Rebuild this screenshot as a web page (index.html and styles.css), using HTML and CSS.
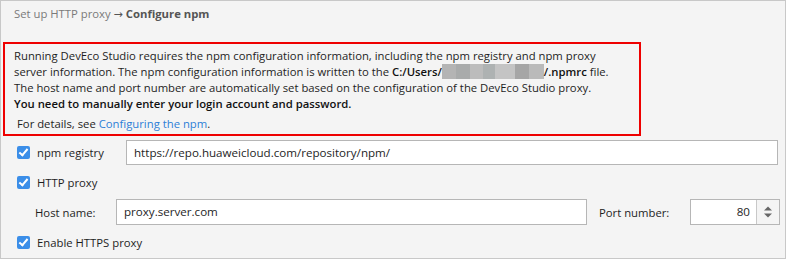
FILE: index.html
```html
<!DOCTYPE html>
<html>
<head>
  <title>Configure npm</title>
  <link rel="stylesheet" href="styles.css">
</head>
<body>
  <div class="panel">
    <div class="panel-title">Set up HTTP proxy <span class="arrow">→</span> <b>Configure npm</b></div>

    <div class="notice">
      <p class="notice-text">
        Running DevEco Studio requires the npm configuration information, including the npm registry and npm proxy<br>
        server information. The npm configuration information is written to the <b>C:/Users/<span class="blurred"></span>/.npmrc</b> file.<br>
        The host name and port number are automatically set based on the configuration of the DevEco Studio proxy.<br>
        <b>You need to manually enter your login account and password.</b>
      </p>
      <p class="notice-link">For details, see <a href="#">Configuring the npm</a>.</p>
    </div>

    <div class="form-row row-registry">
      <label class="check"><span class="check-box"></span>npm registry</label>
      <div class="text-field registry-field">https://repo.huaweicloud.com/repository/npm/</div>
    </div>

    <div class="form-row row-proxy">
      <label class="check"><span class="check-box"></span>HTTP proxy</label>
    </div>

    <div class="form-row row-host">
      <span class="field-label host-label">Host name:</span>
      <div class="text-field host-field">proxy.server.com</div>
      <span class="field-label port-label">Port number:</span>
      <div class="spinner">
        <div class="spinner-value">80</div>
        <div class="spinner-arrows">
          <svg width="10" height="14" viewBox="0 0 10 14"><path d="M5 1.5 L9 5.5 H1 Z" fill="#666"/><path d="M5 12.5 L9 8.5 H1 Z" fill="#666"/></svg>
        </div>
      </div>
    </div>

    <div class="form-row row-https">
      <label class="check"><span class="check-box"></span>Enable HTTPS proxy</label>
    </div>
  </div>
</body>
</html>
```

FILE: styles.css
```css
/* Page */
body {
  margin: 0;
  font-family: "Open Sans", "Noto Sans", sans-serif;
  font-size: 11.3px;
  color: #1e1e1e;
}

.panel {
  width: 786px;
  height: 259px;
  box-sizing: border-box;
  border: 1px solid #c8c8c8;
  background: #f4f4f4;
  position: relative;
}

.panel-title {
  padding: 5px 0 0 13px;
  line-height: 16px;
  color: #7a7a7a;
}

.panel-title .arrow {
  font-family: "DejaVu Sans", sans-serif;
  font-size: 11px;
  color: #555;
}

.panel-title b {
  color: #555;
  font-weight: 700;
}

/* Red highlighted notice */
.notice {
  margin: 19px 0 0 2px;
  width: 638px;
  height: 94px;
  box-sizing: border-box;
  border: 2px solid #ee0000;
  padding: 4px 0 0 9px;
}

.notice p {
  margin: 0;
  line-height: 16px;
}

.notice-text b {
  font-weight: 600;
  color: #111;
}

.blurred {
  display: inline-block;
  width: 102px;
  height: 15px;
  vertical-align: -3px;
  background: linear-gradient(90deg, #b4b4b4 0 14%, #a9abab 14% 27%, #bcbcbc 27% 40%, #aeb2b2 40% 52%, #c4c4c4 52% 72%, #a6a6a6 72% 85%, #bababa 85% 100%);
}

.notice-link {
  margin-top: 4px !important;
  padding-left: 3px;
}

.notice-link a {
  color: #2d7fd7;
  text-decoration: none;
}

/* Form rows */
.form-row {
  display: flex;
  align-items: center;
}

.row-registry {
  margin-top: 3px;
  height: 26px;
}

.row-proxy {
  height: 34px;
}

.row-host {
  height: 26px;
}

.row-https {
  margin-top: 4px;
  height: 26px;
}

.check {
  display: flex;
  align-items: center;
  padding-left: 16px;
}

.check-box {
  width: 13px;
  height: 13px;
  border-radius: 2px;
  background: #3b8ee8;
  margin-right: 7px;
  position: relative;
}

.check-box::after {
  content: '';
  position: absolute;
  left: 4px;
  top: 1px;
  width: 3px;
  height: 7px;
  border: solid #fff;
  border-width: 0 2px 2px 0;
  transform: rotate(40deg);
}

.text-field {
  height: 25px;
  box-sizing: border-box;
  border: 1px solid #b6b6b6;
  background: #fff;
  padding: 0 7px;
  line-height: 23px;
  font-size: 11.6px;
}

.row-registry .check {
  width: 109px;
}

.registry-field {
  width: 652px;
}

.host-label {
  padding-left: 34px;
  width: 81px;
}

.host-field {
  width: 471px;
  height: 26px;
  line-height: 24px;
}

.port-label {
  margin-left: 12px;
  width: 91px;
}

.spinner {
  display: flex;
  width: 90px;
  height: 26px;
  box-sizing: border-box;
  border: 1px solid #b6b6b6;
  background: #fff;
}

.spinner-value {
  flex: 1;
  text-align: right;
  padding-right: 6px;
  line-height: 24px;
  font-size: 11.6px;
}

.spinner-arrows {
  width: 22px;
  border-left: 1px solid #c8c8c8;
  background: #f4f4f4;
  display: flex;
  align-items: center;
  justify-content: center;
}
```
